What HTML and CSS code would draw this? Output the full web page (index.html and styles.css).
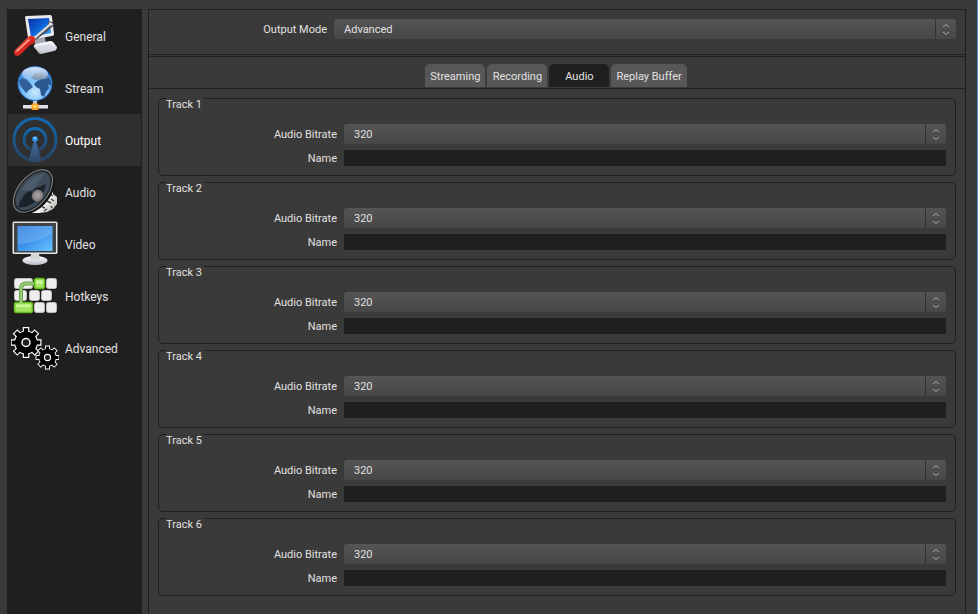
FILE: index.html
```html
<!DOCTYPE html>
<html lang="en">
<head>
  <meta charset="UTF-8">
  <title>Settings</title>
  <link rel="stylesheet" href="styles.css">
</head>
<body>
  <nav class="sidebar">
    <button type="button" class="sidebar-item">
      <svg class="sidebar-icon" viewBox="0 0 48 48">
        <defs>
          <linearGradient id="g_screen" x1="0" y1="0" x2="1" y2="1">
            <stop offset="0" stop-color="#0a2f9c"/><stop offset=".5" stop-color="#0d62d8"/><stop offset="1" stop-color="#39a6f5"/>
          </linearGradient>
          <linearGradient id="g_white" x1="0" y1="0" x2="0" y2="1">
            <stop offset="0" stop-color="#fff"/><stop offset="1" stop-color="#b9bcc6"/>
          </linearGradient>
          <linearGradient id="g_red" x1="0" y1="0" x2="1" y2="1">
            <stop offset="0" stop-color="#ff8a78"/><stop offset=".5" stop-color="#dc2b20"/><stop offset="1" stop-color="#8c0d0a"/>
          </linearGradient>
        </defs>
        <path d="M22 27L34 25L35 33L25 34Z" fill="#a5a7b5"/>
        <path d="M23 35Q22 33 25 32L39 29Q41 29 42 30L46 35Q46 38 43 39L30 42Q28 42 27 40Z" fill="url(#g_white)"/>
        <path d="M26 35L39 32L43 36L30 39Z" fill="#d6d8e4"/>
        <path d="M14 5Q14 4 16 4L39 3Q41 3 41 5L43 22Q43 24 41 24L19 28Q17 28 17 26Z" fill="#e9eaf0"/>
        <path d="M17 7L38 6L40 21L20 25Z" fill="url(#g_screen)"/>
        <path d="M23 25L37 13L37 9L42 10L43 13L40 16L25 28Z" fill="#4b4e55"/>
        <path d="M23 25L38 12L38 10L41 11L42 13L39 14L24 27Z" fill="#dcdde0"/>
        <path d="M4 38L16 26Q18 23 22 24Q25 26 24 30Q22 33 19 33L9 43Q6 45 4 43Q2 41 4 38Z" fill="url(#g_red)"/>
        <path d="M6 39L18 28" stroke="#ffb3a5" stroke-width="1.5" stroke-linecap="round"/>
      </svg>
      <span>General</span>
    </button>
    <button type="button" class="sidebar-item">
      <svg class="sidebar-icon" viewBox="0 0 48 48">
        <defs>
          <radialGradient id="g_globe" cx=".5" cy=".75" r=".75">
            <stop offset="0" stop-color="#c9eaff"/><stop offset=".5" stop-color="#74baf8"/><stop offset="1" stop-color="#2470d6"/>
          </radialGradient>
          <linearGradient id="g_shine" x1="0" y1="0" x2="0" y2="1">
            <stop offset="0" stop-color="#fff" stop-opacity=".85"/><stop offset="1" stop-color="#fff" stop-opacity=".15"/>
          </linearGradient>
        </defs>
        <path d="M22 36H26V41H22Z" fill="#c9ccd2"/>
        <rect x="12" y="41" width="25" height="4" fill="#dfe2e6"/>
        <path d="M12 44.500H37" stroke="#83868c"/>
        <rect x="20.500" y="39.500" width="7" height="6.500" rx="1" fill="#ff9d1c"/>
        <rect x="22" y="41" width="4" height="3" fill="#ffd968"/>
        <circle cx="24" cy="19.500" r="17" fill="url(#g_globe)" stroke="#2a72cf"/>
        <path d="M8 16L12 14L16 16L19 19L22 23L18 26L15 29L12 25L9 21Z" fill="#2f5f96"/>
        <path d="M25 18L29 15L34 15L38 14L40 17L40 22L37 20L38 24L35 28L33 33L30 31L29 25L25 23L23 20Z" fill="#28588f"/>
        <path d="M20 14L24 9L30 8L36 11L38 14L31 15L24 16Z" fill="#52749c"/>
        <ellipse cx="24" cy="10" rx="13" ry="7" fill="url(#g_shine)"/>
      </svg>
      <span>Stream</span>
    </button>
    <button type="button" class="sidebar-item current">
      <svg class="sidebar-icon" viewBox="0 0 48 48">
        <defs>
          <linearGradient id="g_ring" x1="0" y1="0" x2="0" y2="1">
            <stop offset="0" stop-color="#1168b0"/><stop offset="1" stop-color="#244566"/>
          </linearGradient>
          <linearGradient id="g_cone" x1="0" y1="0" x2="0" y2="1">
            <stop offset="0" stop-color="#3f73a8"/><stop offset="1" stop-color="#2c4360"/>
          </linearGradient>
        </defs>
        <g fill="none" stroke="url(#g_ring)" stroke-width="3">
          <circle cx="24" cy="23.500" r="21"/>
          <circle cx="24" cy="23.500" r="11"/>
        </g>
        <path d="M23 24H25L31 45Q24 49 17 45Z" fill="url(#g_cone)" stroke="#2f2f2f" stroke-width=".5"/>
        <circle cx="24" cy="23" r="2.800" fill="#2b97f0"/>
        <circle cx="24" cy="22" r="1.200" fill="#8acbff"/>
      </svg>
      <span>Output</span>
    </button>
    <button type="button" class="sidebar-item">
      <svg class="sidebar-icon" viewBox="0 0 48 48">
        <defs>
          <linearGradient id="g_horn" x1="0" y1="0" x2="1" y2="1">
            <stop offset="0" stop-color="#5b6b7b"/><stop offset=".5" stop-color="#3a4855"/><stop offset="1" stop-color="#10151b"/>
          </linearGradient>
          <radialGradient id="g_dust">
            <stop offset="0" stop-color="#b3aaaa"/><stop offset="1" stop-color="#7b7475"/>
          </radialGradient>
          <linearGradient id="g_magnet" x1="0" y1="0" x2="1" y2="1">
            <stop offset="0" stop-color="#888"/><stop offset=".6" stop-color="#f4f4f0"/><stop offset="1" stop-color="#aaaaa6"/>
          </linearGradient>
        </defs>
        <path d="M38 14Q42 18 42 26L46 29V36L42 41L36 44L28 45L20 45Z" fill="url(#g_magnet)"/>
        <path d="M39 26L42 28M36 33L40 35M40 31L43 33M31 39L34 40M33 43L36 41M40 38L41 40" stroke="#45494b" stroke-width="1.500"/>
        <g transform="translate(22 23) rotate(-50)">
          <ellipse cy="2.500" rx="25" ry="15" fill="#111213"/>
          <ellipse rx="25" ry="14.500" fill="#242729" stroke="#858787"/>
        </g>
        <ellipse cx="22" cy="23" rx="22.500" ry="12.500" transform="rotate(-50 22 23)" fill="#3e4c5a"/>
        <path d="M7 39Q12 22 28 19L35 16Q34 27 24 34Q15 41 7 39Z" fill="#10151b" opacity=".75"/>
        <path d="M11 21Q20 7 33 6Q27 13 22 24Z" fill="#5a6b7c" opacity=".5"/>
        <ellipse cx="26.500" cy="27.500" rx="5.500" ry="6" transform="rotate(35 26.5 27.5)" fill="url(#g_dust)"/>
      </svg>
      <span>Audio</span>
    </button>
    <button type="button" class="sidebar-item">
      <svg class="sidebar-icon" viewBox="0 0 48 48">
        <defs>
          <linearGradient id="g_video" x1="0" y1="0" x2="1" y2="1">
            <stop offset="0" stop-color="#2c78dc"/><stop offset=".5" stop-color="#3c94ee"/><stop offset="1" stop-color="#6cc3ff"/>
          </linearGradient>
        </defs>
        <ellipse cx="24" cy="40.500" rx="12.500" ry="4.500" fill="url(#g_white)"/>
        <path d="M20 34H28L29 39Q24 41 19 39Z" fill="#d3d5d7"/>
        <rect x="1.500" y="1.500" width="45" height="32.500" rx="1.500" fill="#e3e4e4"/>
        <rect x="3" y="3" width="42" height="29.500" fill="#3e4346"/>
        <rect x="6.500" y="6" width="35" height="25" fill="url(#g_video)"/>
        <path d="M6.500 6H41.500V13Q28 23 6.500 24Z" fill="#fff" opacity=".16"/>
      </svg>
      <span>Video</span>
    </button>
    <button type="button" class="sidebar-item">
      <svg class="sidebar-icon" viewBox="0 0 48 48">
        <g fill="#eee" stroke="#bdbdbd">
          <rect x="3.500" y="6.500" width="18" height="10" rx="2"/>
          <rect x="35.500" y="6.500" width="10" height="10" rx="2"/>
          <rect x="3.500" y="18.500" width="12" height="10" rx="2"/>
          <rect x="18.500" y="18.500" width="10" height="10" rx="2"/>
          <rect x="30.500" y="18.500" width="10" height="10" rx="2"/>
          <rect x="23.500" y="30.500" width="10" height="10" rx="2"/>
          <rect x="35.500" y="30.500" width="10" height="10" rx="2"/>
        </g>
        <g fill="#a4e55f" stroke="#63bd16" stroke-width="1.500">
          <rect x="23.500" y="6.500" width="10" height="10" rx="2"/>
          <rect x="3.500" y="30.500" width="18" height="10" rx="2"/>
        </g>
        <path d="M25 8.500H32V12H25ZM5 32.500H20V35H5Z" fill="#cbf59b"/>
        <path d="M10 31V17Q10 11.500 15 11.500H23" fill="none" stroke="#67a842" stroke-width="4"/>
        <path d="M10 31V17Q10 11.500 15 11.500H23" fill="none" stroke="#9acb7b" stroke-width="2"/>
      </svg>
      <span>Hotkeys</span>
    </button>
    <button type="button" class="sidebar-item">
      <svg class="sidebar-icon" viewBox="0 0 48 48">
        <defs>
          <g id="gear">
            <path d="M0-15.500V15.500M-15.500 0H15.500M-11-11L11 11M-11 11L11-11" stroke="#fff" stroke-width="6.500"/>
            <circle r="12" fill="#fff"/>
            <path d="M0-14.300V14.300M-14.300 0H14.300M-10.200-10.200L10.200 10.200M-10.200 10.200L10.200-10.200" stroke="#000" stroke-width="4.200"/>
            <circle r="10.900" fill="#000"/>
            <circle r="4" fill="#1f1f1f" stroke="#fff" stroke-width="1.500"/>
          </g>
        </defs>
        <use href="#gear" transform="translate(15 18.500)"/>
        <use href="#gear" transform="translate(36.500 33.500) scale(.77)"/>
      </svg>
      <span>Advanced</span>
    </button>
  </nav>

  <main class="panel">
    <section class="mode">
      <div class="row">
        <label for="output_mode">Output Mode</label>
        <div class="select">
          <select id="output_mode"><option>Simple</option><option selected>Advanced</option></select>
          <svg class="select-arrows" viewBox="0 0 20 20"><path d="M7 8L10 5.500L13 8M7 13L10 15.500L13 13"/></svg>
        </div>
      </div>
    </section>

    <section class="output">
      <div class="tabs" role="tablist">
        <button type="button" class="tab" role="tab">Streaming</button>
        <button type="button" class="tab" role="tab">Recording</button>
        <button type="button" class="tab current" role="tab" aria-selected="true">Audio</button>
        <button type="button" class="tab" role="tab">Replay Buffer</button>
      </div>
      <div class="tracks">
        <fieldset class="track">
          <legend>Track 1</legend>
          <div class="row">
            <label for="bitrate_1">Audio Bitrate</label>
            <div class="select">
              <select id="bitrate_1"><option>160</option><option selected>320</option></select>
              <svg class="select-arrows" viewBox="0 0 20 20"><path d="M7 8L10 5.500L13 8M7 13L10 15.500L13 13"/></svg>
            </div>
          </div>
          <div class="row">
            <label for="name_1">Name</label>
            <input type="text" id="name_1">
          </div>
        </fieldset>
        <fieldset class="track">
          <legend>Track 2</legend>
          <div class="row">
            <label for="bitrate_2">Audio Bitrate</label>
            <div class="select">
              <select id="bitrate_2"><option>160</option><option selected>320</option></select>
              <svg class="select-arrows" viewBox="0 0 20 20"><path d="M7 8L10 5.500L13 8M7 13L10 15.500L13 13"/></svg>
            </div>
          </div>
          <div class="row">
            <label for="name_2">Name</label>
            <input type="text" id="name_2">
          </div>
        </fieldset>
        <fieldset class="track">
          <legend>Track 3</legend>
          <div class="row">
            <label for="bitrate_3">Audio Bitrate</label>
            <div class="select">
              <select id="bitrate_3"><option>160</option><option selected>320</option></select>
              <svg class="select-arrows" viewBox="0 0 20 20"><path d="M7 8L10 5.500L13 8M7 13L10 15.500L13 13"/></svg>
            </div>
          </div>
          <div class="row">
            <label for="name_3">Name</label>
            <input type="text" id="name_3">
          </div>
        </fieldset>
        <fieldset class="track">
          <legend>Track 4</legend>
          <div class="row">
            <label for="bitrate_4">Audio Bitrate</label>
            <div class="select">
              <select id="bitrate_4"><option>160</option><option selected>320</option></select>
              <svg class="select-arrows" viewBox="0 0 20 20"><path d="M7 8L10 5.500L13 8M7 13L10 15.500L13 13"/></svg>
            </div>
          </div>
          <div class="row">
            <label for="name_4">Name</label>
            <input type="text" id="name_4">
          </div>
        </fieldset>
        <fieldset class="track">
          <legend>Track 5</legend>
          <div class="row">
            <label for="bitrate_5">Audio Bitrate</label>
            <div class="select">
              <select id="bitrate_5"><option>160</option><option selected>320</option></select>
              <svg class="select-arrows" viewBox="0 0 20 20"><path d="M7 8L10 5.500L13 8M7 13L10 15.500L13 13"/></svg>
            </div>
          </div>
          <div class="row">
            <label for="name_5">Name</label>
            <input type="text" id="name_5">
          </div>
        </fieldset>
        <fieldset class="track">
          <legend>Track 6</legend>
          <div class="row">
            <label for="bitrate_6">Audio Bitrate</label>
            <div class="select">
              <select id="bitrate_6"><option>160</option><option selected>320</option></select>
              <svg class="select-arrows" viewBox="0 0 20 20"><path d="M7 8L10 5.500L13 8M7 13L10 15.500L13 13"/></svg>
            </div>
          </div>
          <div class="row">
            <label for="name_6">Name</label>
            <input type="text" id="name_6">
          </div>
        </fieldset>
      </div>
    </section>
  </main>
</body>
</html>
```

FILE: styles.css
```css
* {
  margin: 0;
  padding: 0;
  border: none;
  box-sizing: border-box;
}

body {
  display: flex;
  gap: 6px;
  min-height: 100vh;
  padding: 9px 11px 0 7px;
  border-right: 1px solid #4f93d2;
  background: #3a3a3a;
  color: #e1e0e1;
  font: 11px/14px Roboto, "Liberation Sans", sans-serif;
}

button, select, input {
  color: inherit;
  font: inherit;
}

/* sidebar */
.sidebar {
  flex: none;
  width: 135px;
  padding: 1px;
  background: #1f1f1f;
}

.sidebar-item {
  display: flex;
  align-items: center;
  gap: 6px;
  width: 100%;
  height: 52px;
  padding-left: 3px;
  background: none;
  font-size: 12px;
  line-height: 16px;
}

.sidebar-item span {
  padding-top: 2px;
}

.sidebar-item.current {
  background: #2f2f2f;
  color: #fff;
}

.sidebar-icon {
  width: 48px;
  height: 48px;
}

/* right side */
.panel {
  flex: 1;
  border: 1px solid #1f1f1f;
  border-bottom: none;
}

.mode {
  padding: 9px 9px 15px 7px;
  border-bottom: 1px solid #1f1f1f;
}

.output {
  margin-top: 1px;
  border-top: 1px solid #1f1f1f;
}

.row {
  display: grid;
  grid-template-columns: 171px 1fr;
  column-gap: 7px;
  align-items: center;
}

.row label {
  padding-top: 2px;
  text-align: right;
}

.select {
  position: relative;
  height: 20px;
}

.select select {
  display: block;
  width: 100%;
  height: 20px;
  padding: 2px 0 0 10px;
  border-radius: 3px;
  background: linear-gradient(#545454, #474747);
  appearance: none;
}

.select-arrows {
  position: absolute;
  top: 0;
  right: 0;
  box-sizing: content-box;
  width: 20px;
  height: 20px;
  border-left: 1px solid #303030;
  fill: none;
  stroke: #a5a5a5;
  pointer-events: none;
}

input {
  width: 100%;
  height: 16px;
  padding: 0 4px;
  background: #1f1f1f;
}

/* tabs */
.tabs {
  display: flex;
  justify-content: center;
  gap: 2px;
  padding: 7px 2px 1px 0;
  border-bottom: 1px solid #1f1f1f;
}

.tab {
  min-width: 60px;
  height: 23px;
  padding: 2px 5px 0;
  border-radius: 5px 5px 0 0;
  background: #575757;
}

.tab.current {
  background: #1f1f1f;
}

/* tracks */
.tracks {
  display: grid;
  gap: 6px;
  padding: 9px;
}

.track {
  min-width: 0;
  padding: 0 9px 9px 7px;
  border: 1px solid #1f1f1f;
  border-radius: 5px;
}

/* the title hangs under the border and hides the part above it */
.track legend {
  float: left;
  margin-top: -1px;
  padding-right: 2px;
  background: #3a3a3a;
}

.track .row {
  clear: both;
}

.track legend + .row {
  padding: 12px 0 6px;
}
```
